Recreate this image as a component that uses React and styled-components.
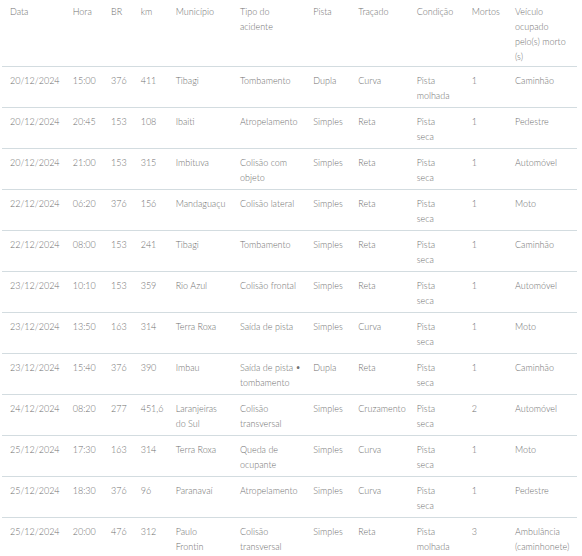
import React from 'react';
import styled, { createGlobalStyle } from 'styled-components';

const GlobalStyle = createGlobalStyle`
  html, body {
    margin: 0;
    padding: 0;
    background: #ffffff;
  }
  body {
    font-family: Lato, 'Open Sans', 'Liberation Sans', sans-serif;
    color: #707070;
  }
`;

const columns = [
  { key: 'data', title: 'Data', width: 62.7 },
  { key: 'hora', title: 'Hora', width: 38.3 },
  { key: 'br', title: 'BR', width: 29.7 },
  { key: 'km', title: 'km', width: 35 },
  { key: 'mun', title: 'Município', width: 64.3 },
  { key: 'tipo', title: 'Tipo do\nacidente', width: 73.3 },
  { key: 'pista', title: 'Pista', width: 45 },
  { key: 'tracado', title: 'Traçado', width: 58.4 },
  { key: 'cond', title: 'Condição', width: 55 },
  { key: 'mortos', title: 'Mortos', width: 43.3 },
  { key: 'veic', title: 'Veículo\nocupado\npelo(s) morto\n(s)', width: 70 },
];

const rows = [
  ['20/12/2024', '15:00', '376', '411', 'Tibagi', 'Tombamento', 'Dupla', 'Curva', 'Pista\nmolhada', '1', 'Caminhão'],
  ['20/12/2024', '20:45', '153', '108', 'Ibaiti', 'Atropelamento', 'Simples', 'Reta', 'Pista\nseca', '1', 'Pedestre'],
  ['20/12/2024', '21:00', '153', '315', 'Imbituva', 'Colisão com\nobjeto', 'Simples', 'Reta', 'Pista\nseca', '1', 'Automóvel'],
  ['22/12/2024', '06:20', '376', '156', 'Mandaguaçu', 'Colisão lateral', 'Simples', 'Reta', 'Pista\nseca', '1', 'Moto'],
  ['22/12/2024', '08:00', '153', '241', 'Tibagi', 'Tombamento', 'Simples', 'Reta', 'Pista\nseca', '1', 'Caminhão'],
  ['23/12/2024', '10:10', '153', '359', 'Rio Azul', 'Colisão frontal', 'Simples', 'Reta', 'Pista\nseca', '1', 'Automóvel'],
  ['23/12/2024', '13:50', '163', '314', 'Terra Roxa', 'Saída de pista', 'Simples', 'Curva', 'Pista\nseca', '1', 'Moto'],
  ['23/12/2024', '15:40', '376', '390', 'Imbau', 'Saída de pista •\ntombamento', 'Dupla', 'Reta', 'Pista\nseca', '1', 'Caminhão'],
  ['24/12/2024', '08:20', '277', '451,6', 'Laranjeiras\ndo Sul', 'Colisão\ntransversal', 'Simples', 'Cruzamento', 'Pista\nseca', '2', 'Automóvel'],
  ['25/12/2024', '17:30', '163', '314', 'Terra Roxa', 'Queda de\nocupante', 'Simples', 'Curva', 'Pista\nseca', '1', 'Moto'],
  ['25/12/2024', '18:30', '376', '96', 'Paranavaí', 'Atropelamento', 'Simples', 'Curva', 'Pista\nseca', '1', 'Pedestre'],
  ['25/12/2024', '20:00', '476', '312', 'Paulo\nFrontin', 'Colisão\ntransversal', 'Simples', 'Reta', 'Pista\nmolhada', '3', 'Ambulância\n(caminhonete)'],
];

const Page = styled.div`
  width: 582px;
  height: 556px;
  overflow: hidden;
  padding-left: 2px;
  box-sizing: border-box;
`;

const Table = styled.table`
  width: 575px;
  table-layout: fixed;
  border-collapse: collapse;
  font-size: 9px;
  font-weight: 300;
  line-height: 15px;
`;

const HeadCell = styled.th`
  height: 66px;
  padding: 4px 0 0 8px;
  box-sizing: border-box;
  text-align: left;
  vertical-align: top;
  font-weight: 300;
  white-space: pre-line;
`;

const Row = styled.tr`
  border-top: 1px solid #d3dce0;
`;

const Cell = styled.td`
  height: 41px;
  padding: 6px 0 0 8px;
  box-sizing: border-box;
  vertical-align: top;
  white-space: pre-line;
`;

export default function App() {
  return (
    <Page>
      <GlobalStyle />
      <Table>
        <colgroup>
          {columns.map((c) => (
            <col key={c.key} style={{ width: c.width }} />
          ))}
        </colgroup>
        <thead>
          <tr>
            {columns.map((c) => (
              <HeadCell key={c.key}>{c.title}</HeadCell>
            ))}
          </tr>
        </thead>
        <tbody>
          {rows.map((r, i) => (
            <Row key={i}>
              {r.map((v, j) => (
                <Cell key={j}>{v}</Cell>
              ))}
            </Row>
          ))}
        </tbody>
      </Table>
    </Page>
  );
}
